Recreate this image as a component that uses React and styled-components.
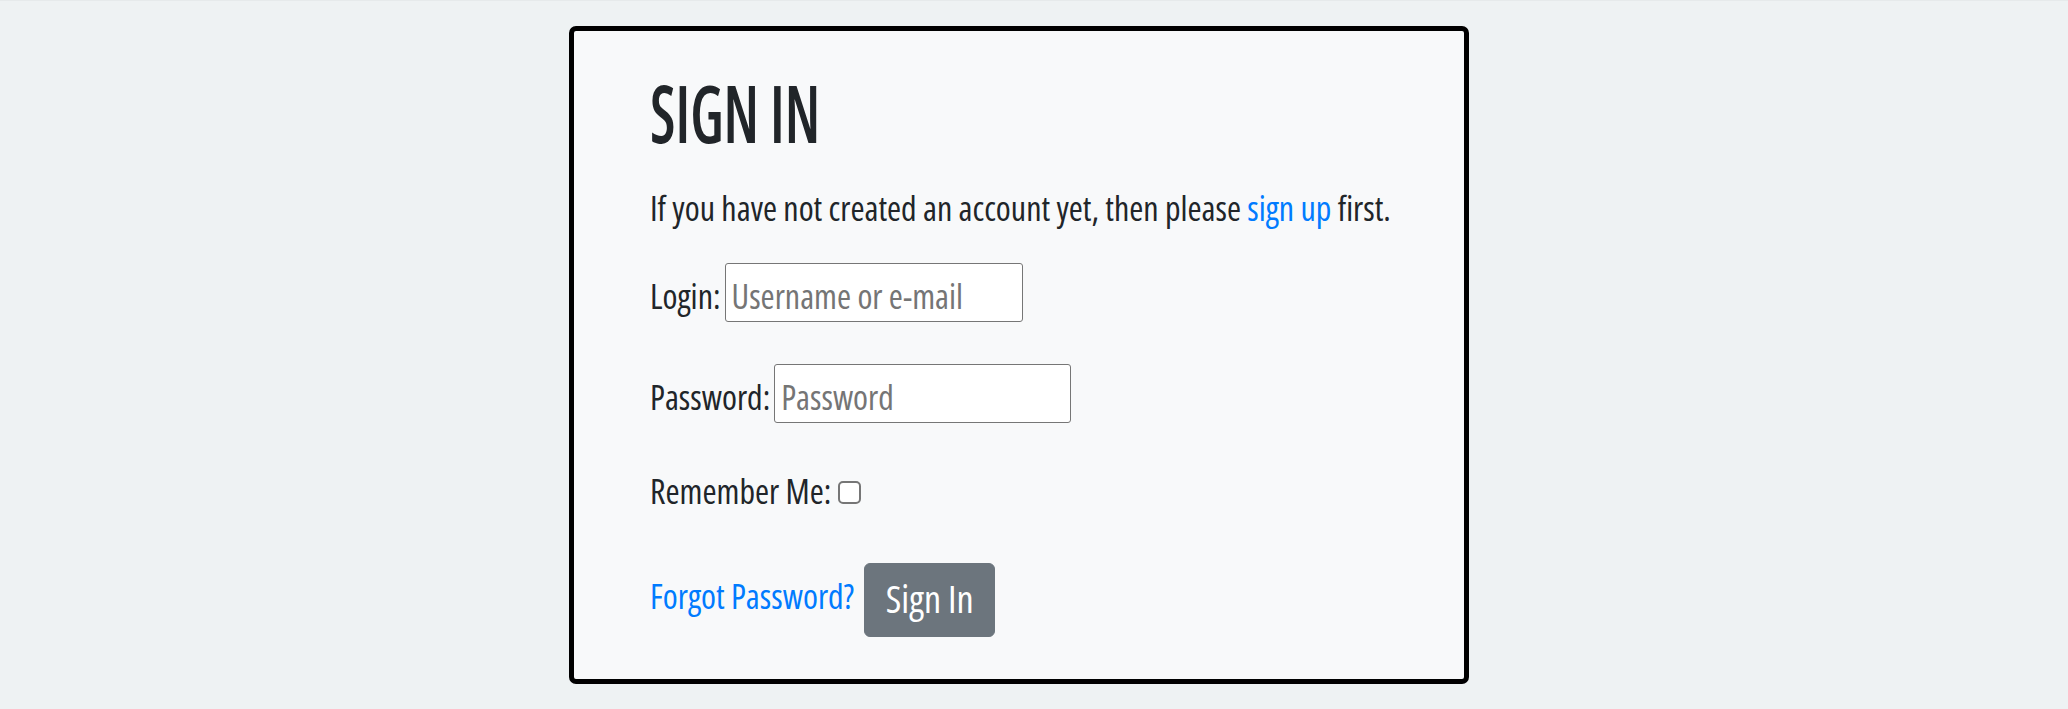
import React from 'react';
import styled, { createGlobalStyle } from 'styled-components';

const GlobalStyle = createGlobalStyle`
  html, body {
    margin: 0;
    background: #eef2f3;
  }
  body {
    font-family: "Open Sans", "Liberation Sans", sans-serif;
    font-stretch: 75%;
    color: #212529;
  }
`;

// Full-width page, the faint top line is the edge of the nav above
const Page = styled.div`
  border-top: 1px solid #e6eaeb;
  padding-top: 25px;
`;

const Main = styled.main`
  max-width: 930px;
  margin: 0 auto;
`;

const Card = styled.section`
  width: 900px;
  box-sizing: border-box;
  background: #f8f9fa;
  border: 5px solid #000;
  border-radius: 7px;
  padding: 33px 40px 42px 76px;
`;

const Title = styled.h1`
  margin: 0;
  font-size: 80px;
  line-height: 96px;
  font-weight: 600;
  text-transform: uppercase;
  transform: scaleX(0.75);
  transform-origin: left center;
`;

const Intro = styled.p`
  margin: 23px 0 0;
  font-size: 34px;
  line-height: 51px;
  font-weight: 500;
`;

const TextLink = styled.a`
  color: #007bff;
  text-decoration: none;
  cursor: pointer;
`;

const Field = styled.div`
  display: flex;
  align-items: baseline;
  gap: 4px;
  margin-top: ${(p) => p.$gap}px;
  font-size: 34px;
  line-height: 51px;
  font-weight: 500;
`;

const Label = styled.label``;

const TextInput = styled.input`
  width: ${(p) => p.$width}px;
  height: 59px;
  box-sizing: border-box;
  padding: 6px 6px 0;
  border: 1px solid #767676;
  border-radius: 3px;
  background: #fff;
  font-family: inherit;
  font-stretch: 75%;
  font-size: 34px;
  font-weight: 500;
  color: #212529;
  outline: none;

  &::placeholder {
    color: #757575;
  }
`;

const Checkbox = styled.input`
  appearance: none;
  width: 23px;
  height: 23px;
  margin: 0 0 0 3px;
  box-sizing: border-box;
  border: 2px solid #767676;
  border-radius: 5px;
  background: #fff;
`;

const Actions = styled.div`
  display: flex;
  align-items: flex-start;
  gap: 10px;
  margin-top: 46px;
  font-size: 34px;
  line-height: 51px;
  font-weight: 500;

  ${TextLink} {
    margin-top: 8px;
  }
`;

const SubmitButton = styled.button`
  width: 131px;
  height: 74px;
  box-sizing: border-box;
  padding: 6px 0 10px;
  background: #6c757d;
  border: 1px solid #6c757d;
  border-radius: 6px;
  color: #fff;
  font-family: inherit;
  font-stretch: 75%;
  font-size: 38px;
  line-height: 57px;
  font-weight: 500;
  cursor: pointer;
`;

export default function App() {
  return (
    <>
      <GlobalStyle />
      <Page>
        <Main>
          <Card>
            <Title>Sign In</Title>
            <Intro>
              If you have not created an account yet, then please{' '}
              <TextLink>sign up</TextLink> first.
            </Intro>
            <Field $gap={29}>
              <Label htmlFor="id_login">Login:</Label>
              <TextInput id="id_login" type="text" placeholder="Username or e-mail" $width={298} />
            </Field>
            <Field $gap={42}>
              <Label htmlFor="id_password">Password:</Label>
              <TextInput id="id_password" type="password" placeholder="Password" $width={297} />
            </Field>
            <Field $gap={43}>
              <Label htmlFor="id_remember">Remember Me:</Label>
              <Checkbox id="id_remember" type="checkbox" />
            </Field>
            <Actions>
              <TextLink>Forgot Password?</TextLink>
              <SubmitButton type="submit">Sign In</SubmitButton>
            </Actions>
          </Card>
        </Main>
      </Page>
    </>
  );
}
